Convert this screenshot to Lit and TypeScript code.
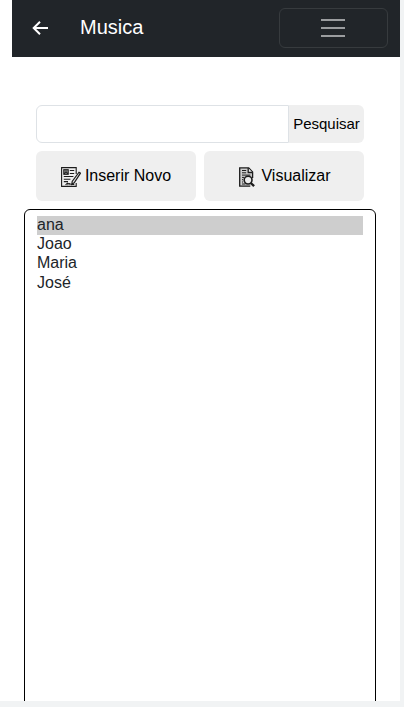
import { LitElement, html, css, svg } from "lit";
import { customElement, state } from "lit/decorators.js";
import { classMap } from "lit/directives/class-map.js";

const backIcon = svg`<svg class="back-icon" width="16" height="14" viewBox="0 0 16 14" fill="none" stroke="#fff" stroke-width="2">
  <path d="M16 7H1.6M8 .8 1.7 7 8 13.2"/></svg>`;

const formIcon = svg`<svg width="20" height="20" viewBox="0 0 20 20" fill="none" stroke="#1c1c1c" stroke-width="1.1">
  <path d="M15.2 7V.6H.6v18.8h14.6V16"/>
  <rect x="2.8" y="2.7" width="4.4" height="4.6" fill="#999"/>
  <path d="M3.4 7c0-2 3.2-2 3.2 0M5 3.4v1.4" stroke-width="1.2"/>
  <path d="M8.8 3.5h4.4M8.8 6.5h4.4M2.8 9.5h9.6M2.8 12.2h6.6M2.8 14.6h4.2"/>
  <path d="m18 5.2 1.5 1-6.3 9.6-2.4 1.5.4-2.9z" fill="#e4e4e4" stroke-width="1.2"/>
  <path d="M4.6 18c1.4-2 2.6-2.6 2.4-.8 1-.9 1.6-.8 1.9.1.8-.5 1.4-.2 2 .2h2.4"/></svg>`;

const documentIcon = svg`<svg width="20" height="20" viewBox="0 0 20 20" fill="none" stroke="#1c1c1c" stroke-width="1.3">
  <path d="M15.6 11V5L11.7.9H2.7v18.2h10.6" fill="#cfcfcf"/>
  <path d="M11.2 1v4.5h4.2" fill="#eee"/>
  <path d="M5 3.5h4.2M5 5.8h4.2M5 8.1h8.4M5 10.4h2M5 12.7h1M5 15h1M5 17h3.4" stroke-width="1"/>
  <circle cx="11.1" cy="13.1" r="3.9" fill="#eee" stroke-width="1.6"/>
  <path d="m13.8 16 3.3 3.1" stroke-width="2.4"/></svg>`;

@customElement("app-root")
export class AppRoot extends LitElement {
  static styles = css`
    :host {
      display: block;
      box-sizing: border-box;
      height: 707px;
      padding: 0 4px 6px 0;
      overflow: hidden;
      background: #f1f3f4;
      color: #212529;
      font: 16px/24px "Liberation Sans", Arial, sans-serif;
    }
    * { box-sizing: border-box; }
    button { font: inherit; color: #000; border: 0; padding: 0; background: #efefef; }
    .page {
      display: flex;
      flex-direction: column;
      height: 701px;
      padding-left: 12px;
      overflow: hidden;
      background: #fff;
    }
    .navbar {
      display: flex;
      flex: none;
      align-items: center;
      height: 57px;
      padding: 0 12px 1px 20px;
      background: #212529;
    }
    .back { display: flex; background: none; }
    .title { flex: 1; margin: 0 0 2px 32px; color: #fff; font-size: 20px; line-height: 30px; }
    .toggler {
      display: flex;
      flex-direction: column;
      align-items: center;
      justify-content: center;
      gap: 6px;
      width: 109px;
      height: 40px;
      padding-right: 1px;
      border: 1px solid #373b3e;
      border-radius: 6px;
      background: none;
    }
    .bar { width: 24px; height: 2px; background: #9b9d9f; }
    .tools {
      display: grid;
      flex: none;
      grid-template-columns: 1fr 1fr;
      gap: 8px;
      margin: 48px 36px 8px 24px;
    }
    .search { display: flex; grid-column: 1 / 3; height: 38px; }
    .query {
      flex: 1;
      min-width: 0;
      padding: 6px 12px;
      border: 1px solid #dee2e6;
      border-radius: 6px 0 0 6px;
      background: #fff;
      font: inherit;
      outline: none;
    }
    .submit { width: 75px; border-radius: 0 6px 6px 0; font-size: 15px; }
    .action {
      display: flex;
      align-items: center;
      justify-content: center;
      gap: 4px;
      height: 50px;
      border-radius: 6px;
    }
    .action svg { margin-top: 2px; }
    .list {
      flex: none;
      height: 540px;
      margin: 0 24px 0 12px;
      padding: 6px 12px;
      border: 1px solid #000;
      border-radius: 6px;
      list-style: none;
    }
    .item { height: 19.2px; line-height: 18px; }
    .selected { background: #cecece; }
  `;

  @state() private selected = 0;
  private names = ["ana", "Joao", "Maria", "José"];

  render() {
    return html`
      <div class="page">
        <header class="navbar">
          <button class="back" aria-label="Voltar">${backIcon}</button>
          <span class="title">Musica</span>
          <button class="toggler" aria-label="Menu">
            <span class="bar"></span><span class="bar"></span><span class="bar"></span>
          </button>
        </header>
        <section class="tools">
          <div class="search">
            <input class="query" type="text" aria-label="Pesquisar" />
            <button class="submit">Pesquisar</button>
          </div>
          <button class="action">${formIcon}<span>Inserir Novo</span></button>
          <button class="action">${documentIcon}<span>Visualizar</span></button>
        </section>
        <ul class="list">
          ${this.names.map(
            (name, i) => html`<li
              class=${classMap({ item: true, selected: i === this.selected })}
              @click=${() => (this.selected = i)}
            >${name}</li>`
          )}
        </ul>
      </div>
    `;
  }
}
